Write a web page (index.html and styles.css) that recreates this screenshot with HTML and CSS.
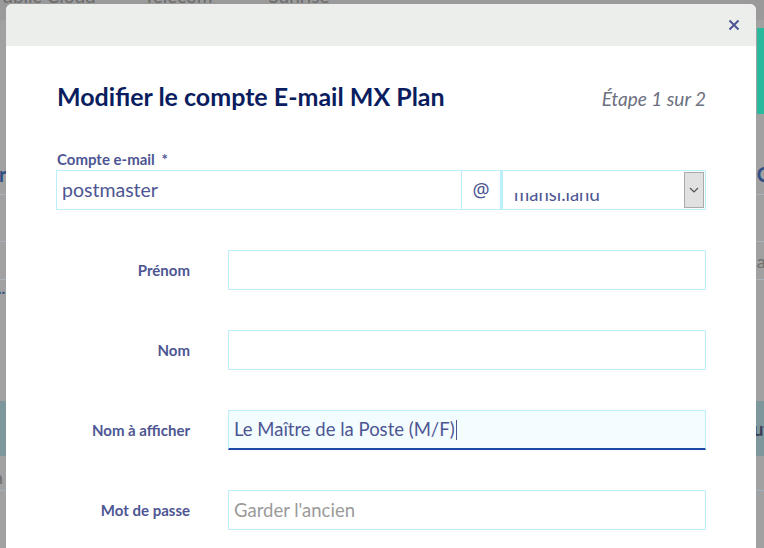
FILE: index.html
```html
<!DOCTYPE html>
<html lang="fr">
<head>
    <meta charset="UTF-8">
    <meta name="viewport" content="width=device-width, initial-scale=1.0">
    <title>Modifier le compte E-mail MX Plan</title>
    <link rel="stylesheet" href="styles.css">
</head>
<body>

    <!-- Page behind the overlay -->
    <div class="page">
        <div class="nav">
            <span class="nav-item first">Public Cloud</span>
            <span class="nav-item">Telecom</span>
            <span class="nav-item last">Sunrise</span>
        </div>
        <div class="hero">
            <div class="hero-btn"></div>
        </div>
        <div class="heading-row">
            <span class="left-bit">r</span>
            <span class="right-bit">C</span>
        </div>
        <div class="table-row row-a"></div>
        <div class="table-row row-b">
            <span></span>
            <span class="right-bit muted">ai</span>
        </div>
        <div class="table-row row-x">
            <span class="left-bit dots">...</span>
        </div>
        <div class="table-head">
            <span></span>
            <span class="right-bit dark">ut</span>
        </div>
        <div class="table-row row-c">
            <span class="left-bit muted">a</span>
        </div>
    </div>

    <!-- Modal -->
    <div class="modal">
        <div class="modal-header">
            <button class="modal-close" aria-label="Fermer">
                <svg width="12" height="12" viewBox="0 0 12 12">
                    <path d="M1.5 1.5 L10.5 10.5 M10.5 1.5 L1.5 10.5" stroke="#4b5494" stroke-width="2" fill="none"/>
                </svg>
            </button>
        </div>
        <div class="modal-body">
            <div class="title-row">
                <h1>Modifier le compte E-mail MX Plan</h1>
                <span class="step">Étape 1 sur 2</span>
            </div>

            <label class="top-label">Compte e-mail <span class="req">*</span></label>
            <div class="input-group">
                <div class="field grow">postmaster</div>
                <div class="addon">@</div>
                <div class="select">
                    <div class="select-clip"><span>mansi.land</span></div>
                    <div class="select-arrow">
                        <svg width="10" height="6" viewBox="0 0 10 6">
                            <path d="M1 1 L5 5 L9 1" stroke="#555" stroke-width="1.2" fill="none"/>
                        </svg>
                    </div>
                </div>
            </div>

            <div class="form-row">
                <label>Prénom</label>
                <div class="field"></div>
            </div>
            <div class="form-row">
                <label>Nom</label>
                <div class="field"></div>
            </div>
            <div class="form-row">
                <label>Nom à afficher</label>
                <div class="field focused">Le Maître de la Poste (M/F)<span class="caret"></span></div>
            </div>
            <div class="form-row">
                <label>Mot de passe</label>
                <div class="field placeholder">Garder l'ancien</div>
            </div>
        </div>
    </div>

</body>
</html>
```

FILE: styles.css
```css
body {
    margin: 0;
    padding: 0;
    font-family: 'Lato', 'Noto Sans', sans-serif;
    background: #a1a1a1;
    overflow: hidden;
    height: 548px;
}
/* Faded page behind the overlay */
.page {
    height: 548px;
}
.nav {
    height: 20px;
    background: #9a9a9a;
    display: flex;
    overflow: hidden;
}
.nav-item {
    font-size: 19px;
    color: #6b6b6b;
    line-height: 19px;
    margin-top: -14px;
    margin-left: 48px;
}
.nav-item.first {
    margin-left: -9px;
}
.nav-item.last {
    margin-left: 56px;
}
.hero {
    height: 110px;
    display: flex;
    justify-content: flex-end;
}
.hero-btn {
    width: 7px;
    height: 86px;
    margin-top: 8px;
    background: #2bb99e;
}
.heading-row {
    height: 64px;
    display: flex;
    justify-content: space-between;
    align-items: flex-end;
    border-bottom: 1px solid #aab3bc;
    font-size: 20px;
    line-height: 20px;
    font-weight: bold;
    color: #2f4f86;
}
.heading-row span {
    margin-bottom: 10px;
}
.heading-row .left-bit {
    margin-left: -1px;
}
.left-bit {
    margin-left: -6px;
}
.right-bit {
    margin-right: -6px;
}
.table-row {
    display: flex;
    justify-content: space-between;
    align-items: center;
}
.row-a {
    height: 46px;
    border-bottom: 1px solid #aab3bc;
}
.row-b {
    height: 37px;
    border-bottom: 1px solid #aab3bc;
}
.row-x {
    height: 121px;
    align-items: flex-start;
}
.dots {
    margin-top: -2px;
    color: #2f4f86;
    font-weight: bold;
    font-size: 16px;
}
.muted {
    color: #6e6e6e;
    font-size: 18px;
}
.table-head {
    height: 55px;
    background: #7e979c;
    display: flex;
    justify-content: space-between;
    align-items: center;
    font-weight: bold;
    font-size: 18px;
}
.dark {
    color: #3a3e5a;
}
.row-c {
    height: 34px;
    border-bottom: 1px solid #9fb0c0;
    align-items: flex-end;
}
.row-c .muted {
    margin-bottom: 2px;
}
/* Modal */
.modal {
    position: absolute;
    left: 6px;
    top: 4px;
    width: 750px;
    height: 560px;
    background: #fff;
    border-radius: 6px 6px 0 0;
    overflow: hidden;
}
.modal-header {
    height: 42px;
    background: #eceeec;
    display: flex;
    justify-content: flex-end;
    align-items: center;
    padding-right: 15px;
}
.modal-close {
    border: none;
    background: none;
    padding: 0;
    width: 14px;
    height: 14px;
    display: flex;
    align-items: center;
    justify-content: center;
    cursor: pointer;
}
.modal-body {
    padding: 35px 50px 0 50px;
}
.title-row {
    display: flex;
    justify-content: space-between;
    align-items: baseline;
    padding-left: 1px;
}
h1 {
    margin: 0;
    font-size: 25px;
    line-height: 30px;
    font-weight: bold;
    color: #0a1d5e;
}
.step {
    font-style: italic;
    font-size: 19px;
    color: #6c7080;
}
.top-label {
    display: block;
    margin-top: 39px;
    padding-left: 1px;
    font-size: 15px;
    font-weight: bold;
    color: #4d5693;
    line-height: 18px;
}
.req {
    margin-left: 3px;
}
.input-group {
    display: flex;
    height: 40px;
    margin-top: 2px;
}
.field {
    height: 40px;
    box-sizing: border-box;
    border: 1px solid #bdeffb;
    padding: 0 5px;
    font-size: 18.5px;
    line-height: 38px;
    color: #4d5693;
    flex: 1;
    display: flex;
    align-items: center;
}
.field.grow {
    flex: 0 0 406px;
    font-size: 19.5px;
}
.addon {
    width: 39px;
    box-sizing: border-box;
    border: 1px solid #bdeffb;
    border-left: none;
    font-family: 'Noto Sans', sans-serif;
    font-size: 19px;
    color: #4d5693;
    display: flex;
    align-items: center;
    justify-content: center;
}
.select {
    flex: 1;
    box-sizing: border-box;
    border: 1px solid #bdeffb;
    border-left-width: 2px;
    display: flex;
    justify-content: space-between;
    align-items: flex-start;
    padding: 1px 1px 1px 0;
}
.select-clip {
    margin-top: 21px;
    height: 15px;
    overflow: hidden;
    padding-left: 11px;
    font-size: 18.5px;
    line-height: 18px;
    color: #4d5693;
}
.select-clip span {
    display: block;
    margin-top: -8px;
}
.select-arrow {
    width: 20px;
    height: 36px;
    box-sizing: border-box;
    background: #e1e1e1;
    border: 1px solid #aaaaaa;
    display: flex;
    align-items: center;
    justify-content: center;
}
.form-row {
    display: flex;
    align-items: center;
    margin-top: 40px;
}
.form-row label {
    width: 134px;
    text-align: right;
    margin-right: 38px;
    font-size: 15px;
    font-weight: bold;
    color: #4d5693;
}
.field.focused {
    background: #f3fcfe;
    border-bottom: 2px solid #1b48a6;
    line-height: 37px;
}
.caret {
    display: inline-block;
    width: 1px;
    height: 20px;
    background: #4d5693;
    margin-left: 1px;
}
.field.placeholder {
    color: #9a9a9a;
}
```
